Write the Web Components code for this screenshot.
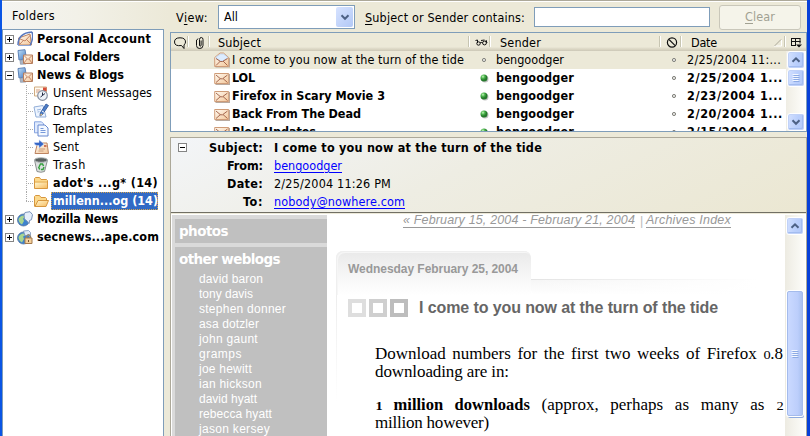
<!DOCTYPE html>
<html lang="en">
<head>
<meta charset="utf-8">
<title>Mail</title>
<style>
html,body{margin:0;width:810px;height:436px;overflow:hidden}
body{font:12.5px/18px "DejaVu Sans Condensed","DejaVu Sans",sans-serif;font-stretch:condensed;color:#000}
</style>
</head>
<body>
<mail-window></mail-window>
<script>
const define=(name,markup,init)=>{
  const t=document.createElement('template');t.innerHTML=markup;
  customElements.define(name,class extends HTMLElement{
    constructor(){super();this.attachShadow({mode:'open'}).append(document.importNode(t.content,true));}
    connectedCallback(){if(init)init(this,this.shadowRoot);}
  });
};

const G=`<defs><linearGradient id="p" x1="0" y1="0" x2="1" y2="1"><stop stop-color="#fffaf2"/><stop offset="1" stop-color="#f3c79a"/></linearGradient>
<linearGradient id="b" x1="0" y1="0" x2="1" y2="1"><stop stop-color="#c4e4fb"/><stop offset="1" stop-color="#3f74bd"/></linearGradient>
<linearGradient id="f" x1="0" y1="0" x2="1" y2="1"><stop stop-color="#fff6cf"/><stop offset="1" stop-color="#f7bd62"/></linearGradient>
<radialGradient id="g" cx=".35" cy=".3"><stop stop-color="#c9f5c0"/><stop offset=".5" stop-color="#4fb84f"/><stop offset="1" stop-color="#267a2c"/></radialGradient></defs>`;
const monitor=`<path d="M1 1.500L8 .7l1.500 9L2 11z" fill="url(#b)" stroke="#5f83b8"/><path d="M3 11.500l4-.5 2 4-5.500.3z" fill="#aab5c4" stroke="#8793a8" stroke-width=".7"/>`;
const globe=`<circle cx="6.500" cy="9" r="6" fill="#3e83cd" stroke="#5572a0" stroke-width=".8"/><path d="M1.500 8q2-4 5.500-3.500l1 2-2 1 1 2.500-2 3.500q-3.500-2-3.500-5.500z" fill="#a9d58f"/>`;
const ICONS={
account:`<path d="M1.500 7L13 3l1.500 11h-12z" fill="url(#p)" stroke="#bd8461"/><path d="M2 7.500l6 2.500 5.500-6M3 13l3.500-3.700M14 13L9.500 8.500" fill="none" stroke="#b7704f" stroke-width=".8"/><path d="M1 14Q1 2 15 1M15 1Q17 7 13 14.500" fill="none" stroke="#5877bd" stroke-width="1.500"/><path d="M1 14.500h13" stroke="#8da5d5"/>`,
local:monitor+`<path d="M6.500 6h9v8.500h-9z" fill="url(#p)" stroke="#b57f5f"/><path d="M7 6.500l4 4 4-4M7 14l3-4M15 14l-3-4" fill="none" stroke="#b7704f" stroke-width=".8"/>`,
unsent:`<path d="M1.500 2h12v9h-12z" fill="#fffaf0" stroke="#d0ab80"/><path d="M10 2.500h3.500v3.500H10z" fill="#d64e3b"/><path d="M3 5h4M3 7h3" stroke="#d39d83"/><circle cx="9.500" cy="10.500" r="4.800" fill="#edf2f8" stroke="#8790a0" stroke-width="1.200"/><path d="M9.500 7.500v3l2.500-2M9.500 10.500l-2 1.500" stroke="#222c46" fill="none"/>`,
drafts:`<path d="M1 4l9-1.500 3 11.500H3z" fill="#eef5ff" stroke="#93afd9"/><path d="M4 7l4-.8M4.500 9l2-.3" stroke="#9bb6de"/><path d="M13 1l2.500 1.500-6 9L7 13l.3-3z" fill="#4e7fc9" stroke="#2c5296" stroke-width=".8"/><path d="M9 8l2.400 1.500" stroke="#fff"/><path d="M7 13l2.500-1.500L8 10.500z" fill="#f0c377"/>`,
templates:`<path d="M1.500 .8h7l2 2v9h-9z" fill="#dfeafd" stroke="#86a4df"/><path d="M5 4h7l3 3v8H5z" fill="#f3f8ff" stroke="#6989cf"/><path d="M7.500 7.500h3M7.500 9.500h5M7.500 11.500h5" stroke="#7799da"/>`,
sent:`<path d="M4.500 4h9.500l1.500 10.500H2z" fill="url(#p)" stroke="#bd8461"/><path d="M11 6h2.500v2H11z" fill="#cf755a"/><path d="M6 10h6M5.500 12h5" stroke="#c79a7b"/><path d="M1 3.500h5V.8l5 4.200-5 4.200V6.500H4Q1.500 6.500 1 3.500z" fill="#3566c7" stroke="#dce8ff" stroke-width=".5"/>`,
trash:`<path d="M1.500 3l2.500 11.500q4 1.500 7.500 0L14.500 3z" fill="#dcdfdf" stroke="#8b9090"/><ellipse cx="8" cy="3" rx="6.500" ry="2.300" fill="#596060" stroke="#b8bebe"/><path d="M6 10l1.500-3h2l1 2M11 10l-1 2.500H8M6.800 12.500L5.500 10" fill="none" stroke="#35a13e" stroke-width="1.500"/>`,
folder:`<path d="M1.500 13.500v-10l1-1h4l1.500 2h5.500l1 1v8z" fill="#fcd98c" stroke="#d7973f"/><path d="M2 13V7.500h12V13z" fill="url(#f)"/><path d="M2 7h12" stroke="#e2ab54"/>`,
open:`<path d="M1.500 13.500v-10l1-1h4l1.500 2h4.500l1 1v2" fill="#fcd98c" stroke="#d7973f"/><path d="M2 13.500L5 7.500h10.500l-2.500 6z" fill="url(#f)" stroke="#d7973f"/>`,
news:globe+`<path d="M8 1.500l5-.8 2.500 3-1 5-2 .8-.5 3-2-2.500L7.500 8 7 4z" fill="#e5eefa" stroke="#7b94bb"/>`,
secure:globe+`<path d="M6.500 2l5-.5 2 2v3H8z" fill="#dfeaf7" stroke="#7b94bb" stroke-width=".8"/><path d="M9.500 9V7.500q2-3.500 4 0V9" fill="none" stroke="#8e8372" stroke-width="1.300"/><path d="M8 9h7v5.500H8z" fill="#f3cf9b" stroke="#a57b4d"/><path d="M11.500 11v2" stroke="#775432"/>`,
mail:`<path d="M15.500 4v10.500H1.500" fill="none" stroke="#b8aaa0" stroke-width="1.200"/><path d="M.7 3.500h14v10H.7z" fill="url(#p)" stroke="#cf9c78"/><path d="M2 5l4.500 3.800h2L13.500 5M2 12.500l4.500-4M13.500 12.500l-4.500-4" fill="none" stroke="#9d5b43" stroke-width=".9"/>`,
mailopen:`<path d="M15.500 6v9H1.500" fill="none" stroke="#b8aaa0" stroke-width="1.200"/><path d="M.7 5.500L6 1h3.500L14.700 5.500v9H.7z" fill="url(#p)" stroke="#cf9c78"/><path d="M2 5l4.500-3h3L13.500 5v1L9 9H6.500L2 6z" fill="#dcecff" stroke="#b7cde8" stroke-width=".7"/><path d="M2 6.500l4.500 3h2l5-3M2 13.500l4.500-4.500M13.500 13.500L9 9" fill="none" stroke="#9d5b43" stroke-width=".9"/>`,
bubble:`<path d="M9.500 10.500Q2.500 11.500 2.500 7 2.500 2.800 8 2.800t5.500 4.200q0 2-1.500 2.800v3.700z" fill="none" stroke="#111"/>`,
clip:`<path d="M4.500 5v5.500q0 3 3.200 3t3.300-3V4.500Q11 2.500 9.300 2.500T7.500 4.500V10q0 1.200.8 1.200t.8-1.200V5.500M4.500 5.500l1.500-2" fill="none" stroke="#111"/>`,
glasses:`<path d="M2.500 5.500l2-.5v3M8 5.500l3.500-.5M13 5l1 3" fill="none" stroke="#111"/><circle cx="5.500" cy="8.500" r="1.700" fill="none" stroke="#111"/><circle cx="11.500" cy="8" r="1.900" fill="none" stroke="#111"/><path d="M7 8q1-1 2.500-.5" fill="none" stroke="#111"/>`,
junk:`<circle cx="8" cy="7.500" r="4.600" fill="none" stroke="#111" stroke-width="1.200"/><path d="M5 4.500l6.200 6.200" stroke="#111" stroke-width="1.100"/>`,
picker:`<path d="M3.500 3v8M3 3.500h9.500M12 3.500v5M3 6.500h9.500M7.500 3v7M3 10.500h5" stroke="#111" fill="none"/><path d="M8 9.500h6l-3 3z" fill="#111"/>`,
dot:`<circle cx="8" cy="8" r="1.600" fill="#e6e6e3" stroke="#83837d"/>`,
green:`<circle cx="9" cy="9" r="3.500" fill="#9a9a9a" opacity=".6"/><circle cx="8" cy="8" r="3.500" fill="url(#g)"/>`,
up:`<path d="M4.500 9.800L8 6.300l3.500 3.500" fill="none" stroke="#4d6185" stroke-width="2"/>`,
down:`<path d="M4.500 6.300L8 9.800l3.500-3.500" fill="none" stroke="#4d6185" stroke-width="2"/>`,
grip:`<path d="M4.500 4.500h6M4.500 6.500h6M4.500 8.500h6M4.500 10.500h6" stroke="#f3f7ff"/><path d="M5.500 5.500h6M5.500 7.500h6M5.500 9.500h6M5.500 11.500h6" stroke="#8caae4"/>`
};
define('ui-icon',`<style>:host{display:block;width:16px;height:16px;flex:none}svg{display:block}</style><div></div>`,(h,s)=>{
  s.querySelector('div').innerHTML=`<svg width="16" height="16" viewBox="0 0 16 16">${G}${ICONS[h.getAttribute('name')]}</svg>`;});

/* A run of text that is tracked to fill a given width. */
define('fit-text',`<style>:host{display:inline-block;white-space:pre;flex:none}</style><slot></slot>`,h=>{
  const w=+h.getAttribute('w'),n=h.textContent.length;
  h.style.letterSpacing='0px';
  h.style.letterSpacing=((w-h.getBoundingClientRect().width)/n).toFixed(3)+'px';});

define('twisty-box',`<style>:host{display:block;box-sizing:border-box;width:9px;height:9px;border:1px solid #848484;background:linear-gradient(90deg,#000,#000) center/5px 1px no-repeat,#fff;flex:none}
:host([plus]){background:linear-gradient(90deg,#000,#000) center/5px 1px no-repeat,linear-gradient(90deg,#000,#000) center/1px 5px no-repeat,#fff}</style>`);

define('tree-row',`<style>:host{display:flex;align-items:center;height:18px;padding-left:2px;font-weight:bold}
.i{margin:0 2px 0 3px;display:flex}.t{padding:0 2px;height:18px;line-height:18px}
:host([child]){padding-left:24px;font-weight:normal;background:repeating-linear-gradient(0deg,#aaa 0 1px,transparent 1px 2px) 23px 0/1px 18px no-repeat,repeating-linear-gradient(90deg,#aaa 0 1px,transparent 1px 2px) 23px 9px/7px 1px no-repeat}
:host([last]){background-size:1px 9px,7px 1px}
:host([child]) .i{margin:0 2px 0 6px}
:host([child]) twisty-box{display:none}
:host([bold]){font-weight:bold}
:host([selected]) .t{background:#316ac5;color:#fff;outline:1px dotted #d7a44c;outline-offset:-1px;padding-right:0}</style>
<twisty-box></twisty-box><div class="i"></div><div class="t"><slot></slot></div>`,(h,s)=>{
  s.querySelector('.i').innerHTML=`<ui-icon name="${h.getAttribute('icon')}"></ui-icon>`;
  s.querySelector('twisty-box').toggleAttribute('plus',h.hasAttribute('closed'));});

define('folder-pane',`<style>:host{display:flex;flex-direction:column;width:167px;height:434px;flex:none}
header{height:27px;line-height:27px;padding-left:10px;background:linear-gradient(90deg,#f4f4f1,#f2f1e8 45%,#ece9d8)}
.tree{width:160px;flex:1;background:#fff;border:1px solid #7f9db9;border-bottom:0;overflow:hidden}</style>
<header><fit-text w="43">Folders</fit-text></header>
<div class="tree">
<tree-row icon="account" closed><fit-text w="114">Personal Account</fit-text></tree-row>
<tree-row icon="local" closed><fit-text w="83">Local Folders</fit-text></tree-row>
<tree-row icon="local"><fit-text w="87">News &amp; Blogs</fit-text></tree-row>
<tree-row child icon="unsent"><fit-text w="99">Unsent Messages</fit-text></tree-row>
<tree-row child icon="drafts"><fit-text w="34">Drafts</fit-text></tree-row>
<tree-row child icon="templates"><fit-text w="60">Templates</fit-text></tree-row>
<tree-row child icon="sent"><fit-text w="26">Sent</fit-text></tree-row>
<tree-row child icon="trash"><fit-text w="33">Trash</fit-text></tree-row>
<tree-row child bold icon="folder"><fit-text w="105">adot's ...g* (14)</fit-text></tree-row>
<tree-row child bold last selected icon="open"><fit-text w="105">millenn...og (14)</fit-text></tree-row>
<tree-row icon="news" closed><fit-text w="81">Mozilla News</fit-text></tree-row>
<tree-row icon="secure" closed><fit-text w="122">secnews...ape.com</fit-text></tree-row>
</div>`);

define('scroll-button',`<style>:host{display:flex;box-sizing:border-box;width:18px;height:18px;align-items:center;justify-content:center;border:1px solid #fff;border-radius:3px;background:linear-gradient(100deg,#d4e1ff,#bacffc 55%,#b3c9f8);box-shadow:inset 0 0 0 1px #c1d2f8,inset -1px -1px 0 1px #a3bcf0;flex:none}</style><div></div>`,(h,s)=>{
  s.querySelector('div').innerHTML=`<ui-icon name="${h.getAttribute('icon')}"></ui-icon>`;});

define('filter-bar',`<style>:host{display:flex;height:30px;align-items:center;padding-left:6px;box-sizing:border-box}
u{text-underline-offset:2px}fit-text{padding-top:1px}
.sel{display:flex;align-items:center;box-sizing:border-box;width:137px;height:24px;border:1px solid #7f9db9;background:#fff;margin-left:10px;padding:0 1px 0 5px;justify-content:space-between}
.drop{width:17px;height:20px;border-radius:2px;background:linear-gradient(135deg,#d7e3ff,#b2c8f6);display:flex;align-items:center;justify-content:center}
.in{box-sizing:border-box;width:176px;height:20px;border:1px solid #7f9db9;background:#fff;margin-left:9px}
.btn{box-sizing:border-box;width:82px;height:25px;border:1px solid #c9c7ba;border-radius:3px;background:#f5f4ea;color:#a1a192;text-align:center;line-height:22px;margin-left:9px}.btn fit-text{padding:0}</style>
<fit-text w="32">V<u>i</u>ew:</fit-text>
<div class="sel"><fit-text w="14" style="padding:0">All</fit-text><div class="drop"><ui-icon name="down"></ui-icon></div></div>
<fit-text w="160" style="margin-left:10px"><u>S</u>ubject or Sender contains:</fit-text>
<div class="in"></div><div class="btn"><fit-text w="30"><u>C</u>lear</fit-text></div>`);

define('mail-row',`<style>:host{display:flex;height:18px;align-items:center;font-weight:bold;padding-left:43px}
:host([read]){font-weight:normal;background:#ece9d8}
.s{width:244px;margin-left:2px}.n{width:170px;margin-left:4px}.d{margin-left:5px}</style>
<div class="m"></div><div class="s"><slot name="subject"></slot></div><div class="r"></div><div class="n"><slot name="sender"></slot></div><ui-icon name="dot"></ui-icon><div class="d"><slot name="date"></slot></div>`,(h,s)=>{
  const read=h.hasAttribute('read');
  s.querySelector('.m').innerHTML=`<ui-icon name="${read?'mailopen':'mail'}"></ui-icon>`;
  s.querySelector('.r').innerHTML=`<ui-icon name="${read?'dot':'green'}"></ui-icon>`;});

const row=(s,w,d,dw,read='')=>`<mail-row ${read}><fit-text slot="subject" w="${w}">${s}</fit-text><fit-text slot="sender" w="${read?68:78}">bengoodger</fit-text><fit-text slot="date" w="${dw}">${d}</fit-text></mail-row>`;
define('thread-list',`<style>:host{display:flex;flex-direction:column;box-sizing:border-box;width:637px;height:100px;border:1px solid #7f9db9;background:#fff;overflow:hidden}
.h{display:grid;grid-template-columns:18px 21px 260px 21px 170px 21px 104px 20px;height:18px;flex:none;background:linear-gradient(#ece9d8 0 14px,#e2decd 15px,#d5d0bd 17px,#cbc7b8);line-height:19px}
.h>*{display:flex;align-items:center;justify-content:center;box-sizing:border-box;background:linear-gradient(90deg,#c7c5b2 50%,#fff 50%) right 3px/2px 11px no-repeat}
.h>.t{justify-content:flex-start;padding-left:8px}.h>:nth-child(n+4).t{padding-left:9px}.h>:last-child{background:none}
.sort{margin:0 4px 0 auto}.b{display:flex;height:80px}.rows{width:615px;overflow:hidden}
.sb{display:flex;flex-direction:column;width:18px;padding-left:1px;background:linear-gradient(90deg,#efede4,#fefefb)}.sb>:last-child{margin-top:auto}</style>
<div class="h"><div><ui-icon name="bubble"></ui-icon></div><div><ui-icon name="clip"></ui-icon></div><div class="t"><fit-text w="43">Subject</fit-text></div><div><ui-icon name="glasses"></ui-icon></div><div class="t"><fit-text w="41">Sender</fit-text></div><div><ui-icon name="junk"></ui-icon></div><div class="t"><fit-text w="26">Date</fit-text><svg class="sort" width="8" height="8"><path d="M7.500 1v6H0" fill="none" stroke="#fff"/><path d="M.5 7L7 .5" stroke="#aaa797"/></svg></div><div><ui-icon name="picker"></ui-icon></div></div>
<div class="b"><div class="rows">${row('I come to you now at the turn of the tide',232,'2/25/2004 11:...',94,'read')}${row('LOL',23,'2/25/2004 1...',96)}${row('Firefox in Scary Movie 3',153,'2/23/2004 1...',96)}${row('Back From The Dead',129,'2/20/2004 1...',96)}${row('Blog Updates',84,'2/15/2004 4...',96)}</div>
<div class="sb"><scroll-button icon="up"></scroll-button><scroll-button icon="grip"></scroll-button><scroll-button icon="down"></scroll-button></div></div>`);

define('message-header',`<style>:host{display:flex;box-sizing:border-box;height:74px;padding:1px 0 0 7px;background:linear-gradient(155deg,#f3f5f8,#eeede3 45%,#ebe7d2);flex:none}
twisty-box{margin-top:4px}
.g{display:grid;grid-template-columns:76px auto;column-gap:11px;grid-auto-rows:18px;justify-items:start}
.g>:nth-child(odd){justify-self:end;font-weight:bold}.b{font-weight:bold}.a{color:#00f;text-decoration:underline;text-underline-offset:2px}</style>
<twisty-box></twisty-box><div class="g"><fit-text w="54">Subject:</fit-text><fit-text class="b" w="268">I come to you now at the turn of the tide</fit-text>
<fit-text w="36">From:</fit-text><fit-text class="a" w="68">bengoodger</fit-text>
<fit-text w="36">Date:</fit-text><fit-text w="117">2/25/2004 11:26 PM</fit-text>
<fit-text w="20">To:</fit-text><fit-text class="a" w="131">nobody@nowhere.com</fit-text></div>`);

define('blog-sidebar',`<style>:host{display:flex;flex-direction:column;gap:4px;box-sizing:border-box;width:155px;height:222px;padding:4px 0 0 3px;background:#dadada;color:#fff;font:12px/15px "Liberation Sans",sans-serif;flex:none}
section{background:#c0c0c0;padding-left:4px;height:24px;flex:none;box-sizing:border-box}section:last-child{flex:1}
h2{margin:0;font:bold 13.5px/24px "DejaVu Sans",sans-serif}ul{list-style:none;margin:0;padding:1px 0 0 20px}li{height:15px}</style>
<section><h2><fit-text w="49">photos</fit-text></h2></section><section><h2><fit-text w="101">other weblogs</fit-text></h2><ul>
${[['david baron',64],['tony davis',54],['stephen donner',87],['asa dotzler',60],['john gaunt',59],['gramps',43],['joe hewitt',53],['ian hickson',63],['david hyatt',58],['rebecca hyatt',73],['jason kersey',71]].map(([t,w])=>`<li><fit-text w="${w}">${t}</fit-text></li>`).join('')}</ul></section>`);

define('blog-post',`<style>:host{display:block;width:458px;height:222px;font-family:"Liberation Sans",sans-serif;overflow:hidden;color:#999;background:linear-gradient(#e8e8e8,#fff) 9px 48px/1px 140px no-repeat}
nav{display:flex;font:italic 12.500px/15px "Liberation Sans",sans-serif;padding-left:76px;gap:5px;height:37px;box-sizing:border-box;margin-top:-1px}
nav .a{border-bottom:1px solid #999;height:13px;line-height:13px}nav span{font-style:normal;color:#bbb;width:2px;margin-right:-1px}
.top{display:flex;padding-left:9px;height:44px}
.tab{box-sizing:border-box;width:195px;height:44px;border-radius:7px 7px 0 0;box-shadow:inset 1px 1px 0 #efefef,inset 2px 2px 0 #f6f6f6;background:linear-gradient(#e9e9e9,#f6f6f6 55%,#fff);font:bold 12px/36px "Liberation Sans",sans-serif;padding-left:12px}
.line{margin-top:20px;height:24px;width:225px;box-sizing:border-box;border-radius:0 0 0 6px;background:linear-gradient(90deg,transparent,#fff),linear-gradient(#fff 0 8px,#e4e4e4 8px 9px,#f6f6f6 9px,#fff)}
.title{display:flex;align-items:center;gap:3px;padding:0 0 0 20px;margin:4px 0 0 1px;height:18px;color:#666;font:bold 16px/18px "Liberation Sans",sans-serif}
i{box-sizing:border-box;width:18px;height:18px;border:4px solid #dedede}i+i{border-color:#cfcfcf}i+i+i{border-color:#bdbdbd;margin-right:8px}
article{font:17px/18px "Liberation Serif",serif;color:#000;margin:28px 2px 0 48px;width:408px}
p{margin:0 0 15px}.j{display:block;height:18px;text-align:justify;text-align-last:justify}b{font-size:16.500px}
small{font-size:12px;display:inline-block;transform:scaleX(1.2);margin:0 .5px;line-height:10px}</style>
<nav><fit-text class="a" w="232">« February 15, 2004 - February 21, 2004</fit-text><span>|</span><fit-text class="a" w="85">Archives Index</fit-text></nav>
<div class="top"><div class="tab"><fit-text w="170">Wednesday February 25, 2004</fit-text></div><div class="line"></div></div>
<div class="title"><i></i><i></i><i></i><fit-text w="299">I come to you now at the turn of the tide</fit-text></div>
<article><p><span class="j">Download numbers for the first two weeks of Firefox <span><small>0</small>.8</span></span><fit-text w="134">downloading are in:</fit-text></p>
<p><span class="j"><b><small>1</small> million downloads</b> (approx, perhaps as many as <small>2</small></span><fit-text w="114">million however)</fit-text></p></article>`);

define('page-scrollbar',`<style>:host{display:flex;flex-direction:column;width:20px;box-sizing:border-box;padding:2px 0 0 1px;height:222px;background:linear-gradient(90deg,#edebe2,#fdfdfa)}
.thumb{box-sizing:border-box;width:16px;height:125px;margin:56px 0 0 1px;border:1px solid #a4bbec;border-radius:2px;background:linear-gradient(90deg,#cad9ff,#bccefb 70%,#a9c1f0);display:flex;align-items:center;justify-content:center;box-shadow:0 0 0 1px #fff,1px 2px 0 #8fabdf}</style>
<scroll-button icon="up"></scroll-button><div class="thumb"><ui-icon name="grip"></ui-icon></div>`);

define('message-pane',`<style>:host{display:flex;flex-direction:column;box-sizing:border-box;width:637px;height:299px;border:solid #aca899;border-width:1px 1px 0;background:#fff;margin-top:5px}
.rule{height:2px;box-sizing:border-box;border-top:1px solid #716f64;background:#ece9d8;flex:none}.view{display:flex;padding:1px 0 0 1px;height:222px}</style>
<message-header></message-header><div class="rule"></div><div class="view"><blog-sidebar></blog-sidebar><blog-post></blog-post><page-scrollbar></page-scrollbar></div>`);

define('mail-window',`<style>:host{display:flex;box-sizing:border-box;width:810px;height:436px;border:solid #0a55e5;border-width:0 3px 0 2px;border-right-color:#0840d8;background:linear-gradient(#aca899 0 1px,#fff 1px 2px,#ece9d8 2px);padding-top:2px;overflow:hidden}
main{display:flex;flex-direction:column;width:637px;flex:none;padding-left:1px}</style>
<folder-pane></folder-pane><main><filter-bar></filter-bar><thread-list></thread-list><message-pane></message-pane></main>`);
</script>
</body>
</html>
